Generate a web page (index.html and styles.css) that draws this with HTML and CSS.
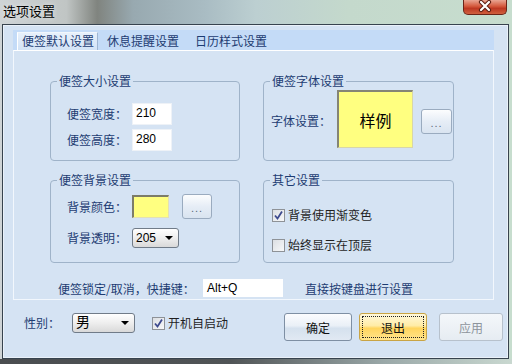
FILE: index.html
```html
<!DOCTYPE html>
<html>
<head>
<meta charset="utf-8">
<link rel="stylesheet" href="styles.css">
</head>
<body>
<div class="screen">
  <div class="titlebar">
    <span class="title">选项设置</span>
    <span class="close">
      <svg width="44" height="14" viewBox="0 0 44 14">
        <path d="M19 2 L27 10 M27 2 L19 10" stroke="#5b1d12" stroke-width="4.2" stroke-linecap="round"/>
        <path d="M19 2 L27 10 M27 2 L19 10" stroke="#ffffff" stroke-width="2.2" stroke-linecap="round"/>
      </svg>
    </span>
  </div>
  <div class="frame">
    <div class="tabs">
      <div class="tabstrip">
        <span class="tab active">便签默认设置</span>
        <span class="tab">休息提醒设置</span>
        <span class="tab">日历样式设置</span>
      </div>
      <div class="panel">
        <div class="groups">
          <div class="group g1">
            <div class="group-title">便签大小设置</div>
            <div class="rows rows-size">
              <div class="row r26"><span class="lbl">便签宽度：</span><span class="input w40">210</span></div>
              <div class="row r26"><span class="lbl">便签高度：</span><span class="input w40">280</span></div>
            </div>
          </div>
          <div class="group g1">
            <div class="group-title">便签字体设置</div>
            <div class="row font-row">
              <span class="lbl lbl-font">字体设置：</span>
              <span class="sample">样例</span>
              <span class="dots-btn dots-font">...</span>
            </div>
          </div>
          <div class="group g2">
            <div class="group-title">便签背景设置</div>
            <div class="rows rows-bg">
              <div class="row r31"><span class="lbl">背景颜色：</span><span class="swatch"></span><span class="dots-btn dots-bg">...</span></div>
              <div class="row r31"><span class="lbl">背景透明：</span><span class="select w47">205<i class="arrow"></i></span></div>
            </div>
          </div>
          <div class="group g2">
            <div class="group-title">其它设置</div>
            <div class="rows rows-other">
              <div class="row r30 chk-row"><span class="checkbox"><svg width="11" height="11" viewBox="0 0 11 11"><path d="M2 5.5 L4.5 8.5 L9 1.5" fill="none" stroke="#3d4a8e" stroke-width="1.8"/></svg></span><span class="chk-text">背景使用渐变色</span></div>
              <div class="row r30 chk-row"><span class="checkbox"></span><span class="chk-text">始终显示在顶层</span></div>
            </div>
          </div>
        </div>
        <div class="shortcut">
          <span class="sc-label">便签锁定/取消，快捷键：</span>
          <span class="input sc-input">Alt+Q</span>
          <span class="sc-hint">直接按键盘进行设置</span>
        </div>
      </div>
    </div>
    <div class="bottombar">
      <span class="gender-label">性别：</span>
      <span class="select w63 sel-gender">男<i class="arrow"></i></span>
      <span class="checkbox auto-chk"><svg width="11" height="11" viewBox="0 0 11 11"><path d="M2 5.5 L4.5 8.5 L9 1.5" fill="none" stroke="#3d4a8e" stroke-width="1.8"/></svg></span>
      <span class="chk-text auto-text">开机自启动</span>
      <span class="btn btn-ok">确定</span>
      <span class="btn btn-exit">退出</span>
      <span class="btn btn-apply">应用</span>
    </div>
  </div>
  <div class="bottomstrip"></div>
</div>
</body>
</html>
```
FILE: styles.css
```css
* { box-sizing: border-box; }
html, body { margin: 0; padding: 0; }
body {
  font-family: "Noto Sans CJK SC", "Noto Sans", sans-serif;
  font-size: 12px;
  color: #1d3c72;
}
.screen {
  width: 512px;
  height: 364px;
  overflow: hidden;
  display: flex;
  flex-direction: column;
  background: linear-gradient(90deg, #cfd4d6 0, #c0c5c4 13%, #80847f 19%, #98a9b0 26%, #a9bcc3 40%, #bccfd1 50%, #c4d9cc 68%, #c7ddce 100%);
}
.titlebar {
  height: 24px;
  flex: none;
  display: flex;
  align-items: flex-start;
}
.title {
  padding: 3px 0 0 3px;
  font-size: 13px;
  line-height: 15px;
  color: #000;
  text-shadow: 0 0 5px rgba(255,255,255,.7);
}
.close {
  margin-left: auto;
  margin-right: 5px;
  width: 44px;
  height: 15px;
  border: 1px solid #6b2418;
  border-top: 0;
  border-radius: 0 0 5px 5px;
  background: linear-gradient(#e9a592, #d4583c 45%, #bd3822 60%, #d0603f);
  display: flex;
  align-items: flex-start;
  justify-content: center;
}
.close svg { display: block; margin-left: -2px; }
.frame {
  margin-left: 2px;
  width: 507px;
  height: 335px;
  flex: none;
  border: 1px solid #37434e;
  background: #d5e3f3;
  box-shadow: inset 0 0 0 1px #eaf1f9;
}
.bottomstrip {
  flex: 1;
  background: linear-gradient(90deg, #4a4d50 0, #505456 45%, #9aa8a8 75%, #c9d8d0 100%);
}

/* tabs */
.tabs {
  margin: 5px 0 0 10px;
  width: 481px;
}
.tabstrip {
  height: 20px;
  background: #c4dbf7;
  display: flex;
  align-items: flex-end;
  padding-left: 4px;
}
.tab {
  height: 18px;
  line-height: 16px;
  padding: 1px 7px 0;
  margin-left: 2px;
  color: #1d3c72;
  white-space: nowrap;
}
.tab.active {
  margin-left: 0;
  padding: 0 3px 0 4px;
  background: linear-gradient(#e7f0fb, #d3e3f6);
  border-left: 1px solid #ffffff;
  border-top: 1px solid #f1f6fc;
  border-right: 1px solid #9fb6d2;
}
.panel {
  height: 250px;
  border: 1px solid #f2f7fd;
  border-top-color: #ffffff;
  padding: 30px 0 0 36px;
}
.groups {
  display: grid;
  grid-template-columns: 190px 191px;
  grid-template-rows: 80px 83px;
  column-gap: 23px;
  row-gap: 19px;
}
.group {
  border: 1px solid #9fb3c9;
  border-radius: 4px;
}
.group-title {
  width: fit-content;
  margin: -8px 0 0 6px;
  padding: 0 2px;
  line-height: 14px;
  background: #d5e3f3;
  color: #1d3c72;
}
.rows { display: flex; flex-direction: column; }
.rows-size { padding: 13px 0 0 16px; }
.rows-bg { padding: 4px 0 0 16px; }
.rows-other { padding: 13px 0 0 8px; }
.row { display: flex; align-items: center; }
.r26 { height: 26px; }
.r31 { height: 31px; }
.r30 { height: 30px; }
.lbl {
  width: 65px;
  line-height: 16px;
  white-space: nowrap;
}
.input {
  height: 22px;
  background: #fff;
  border: 1px solid #eef2f7;
  color: #000;
  font-family: "Liberation Sans", "Noto Sans", sans-serif;
  font-size: 12px;
  line-height: 17px;
  padding: 1px 0 0 3px;
}
.w40 { width: 40px; }

.font-row { padding: 2px 0 0 7px; }
.lbl-font { width: 66px; margin-top: 3px; }
.sample {
  width: 76px;
  height: 58px;
  background: #ffff80;
  border-top: 2px solid #858575;
  border-left: 2px solid #858575;
  border-right: 1px solid #d8d6a8;
  border-bottom: 1px solid #d8d6a8;
  color: #000;
  font-size: 16px;
  display: flex;
  align-items: center;
  justify-content: center;
}
.dots-btn {
  width: 31px;
  height: 25px;
  border: 1px solid #9aabbf;
  border-radius: 3px;
  background: linear-gradient(#fcfdfe, #e6edf6 50%, #d9e4f0);
  color: #5b6a7b;
  font-family: "Liberation Sans", sans-serif;
  font-size: 11px;
  letter-spacing: 1px;
  display: flex;
  align-items: center;
  justify-content: center;
  padding-top: 3px;
}
.dots-font { margin: 5px 0 0 8px; }
.dots-bg { width: 30px; margin-left: 13px; }
.swatch {
  width: 37px;
  height: 23px;
  background: #ffff80;
  border-top: 2px solid #7c7c68;
  border-left: 2px solid #7c7c68;
  border-right: 1px solid #e3e0b4;
  border-bottom: 1px solid #e3e0b4;
}
.select {
  position: relative;
  height: 20px;
  border: 1px solid #707b88;
  border-radius: 3px;
  background: linear-gradient(#ffffff, #eeeeee 50%, #d9d9d9);
  color: #000;
  font-family: "Liberation Sans", "Noto Sans CJK SC", sans-serif;
  font-size: 12px;
  line-height: 18px;
  padding-left: 3px;
}
.w47 { width: 47px; }
.w63 { width: 63px; }
.arrow {
  position: absolute;
  right: 5px;
  top: 7px;
  width: 0;
  height: 0;
  border-left: 4px solid transparent;
  border-right: 4px solid transparent;
  border-top: 4px solid #000;
}
.checkbox {
  width: 13px;
  height: 13px;
  border: 1px solid #8e9297;
  background: linear-gradient(135deg, #dcdfe3, #f7f8f9);
  display: flex;
  align-items: center;
  justify-content: center;
  flex: none;
}
.checkbox svg { display: block; }
.chk-text {
  margin-left: 3px;
  color: #1f1f1f;
  line-height: 16px;
  white-space: nowrap;
}
.shortcut {
  display: flex;
  align-items: center;
  height: 20px;
  margin: 15px 0 0 8px;
}
.sc-label { width: 145px; white-space: nowrap; }
.sc-input {
  width: 80px;
  height: 18px;
  line-height: 15px;
  padding-top: 1px;
  border-color: #fff;
}
.sc-hint { margin-left: 22px; }

/* bottom bar */
.bottombar {
  display: flex;
  align-items: flex-start;
  margin-top: 13px;
  padding: 0 5px 0 21px;
}
.gender-label {
  width: 48px;
  line-height: 20px;
}
.sel-gender { font-size: 14px; line-height: 17px; }
.auto-chk { margin: 4px 0 0 17px; }
.auto-text { line-height: 20px; }
.btn {
  height: 28px;
  border: 1px solid #7e8fa3;
  border-radius: 3px;
  background: linear-gradient(#fbfcfe, #eaf0f7 45%, #d5e1ee 55%, #e1e9f3);
  color: #111;
  font-size: 12px;
  display: flex;
  align-items: center;
  justify-content: center;
}
.btn-ok { width: 68px; margin-left: auto; margin-right: 7px; }
.btn-exit {
  width: 68px;
  margin-right: 12px;
  border-color: #c9a444;
  background: linear-gradient(#fff9dc, #ffeca6 45%, #ffd55e 55%, #ffe48c);
  outline: 1px dotted #222;
  outline-offset: -4px;
}
.btn-apply {
  width: 64px;
  border-color: #b7c1cc;
  background: linear-gradient(#f4f7fa, #e6ecf2);
  color: #8d949c;
}
```
